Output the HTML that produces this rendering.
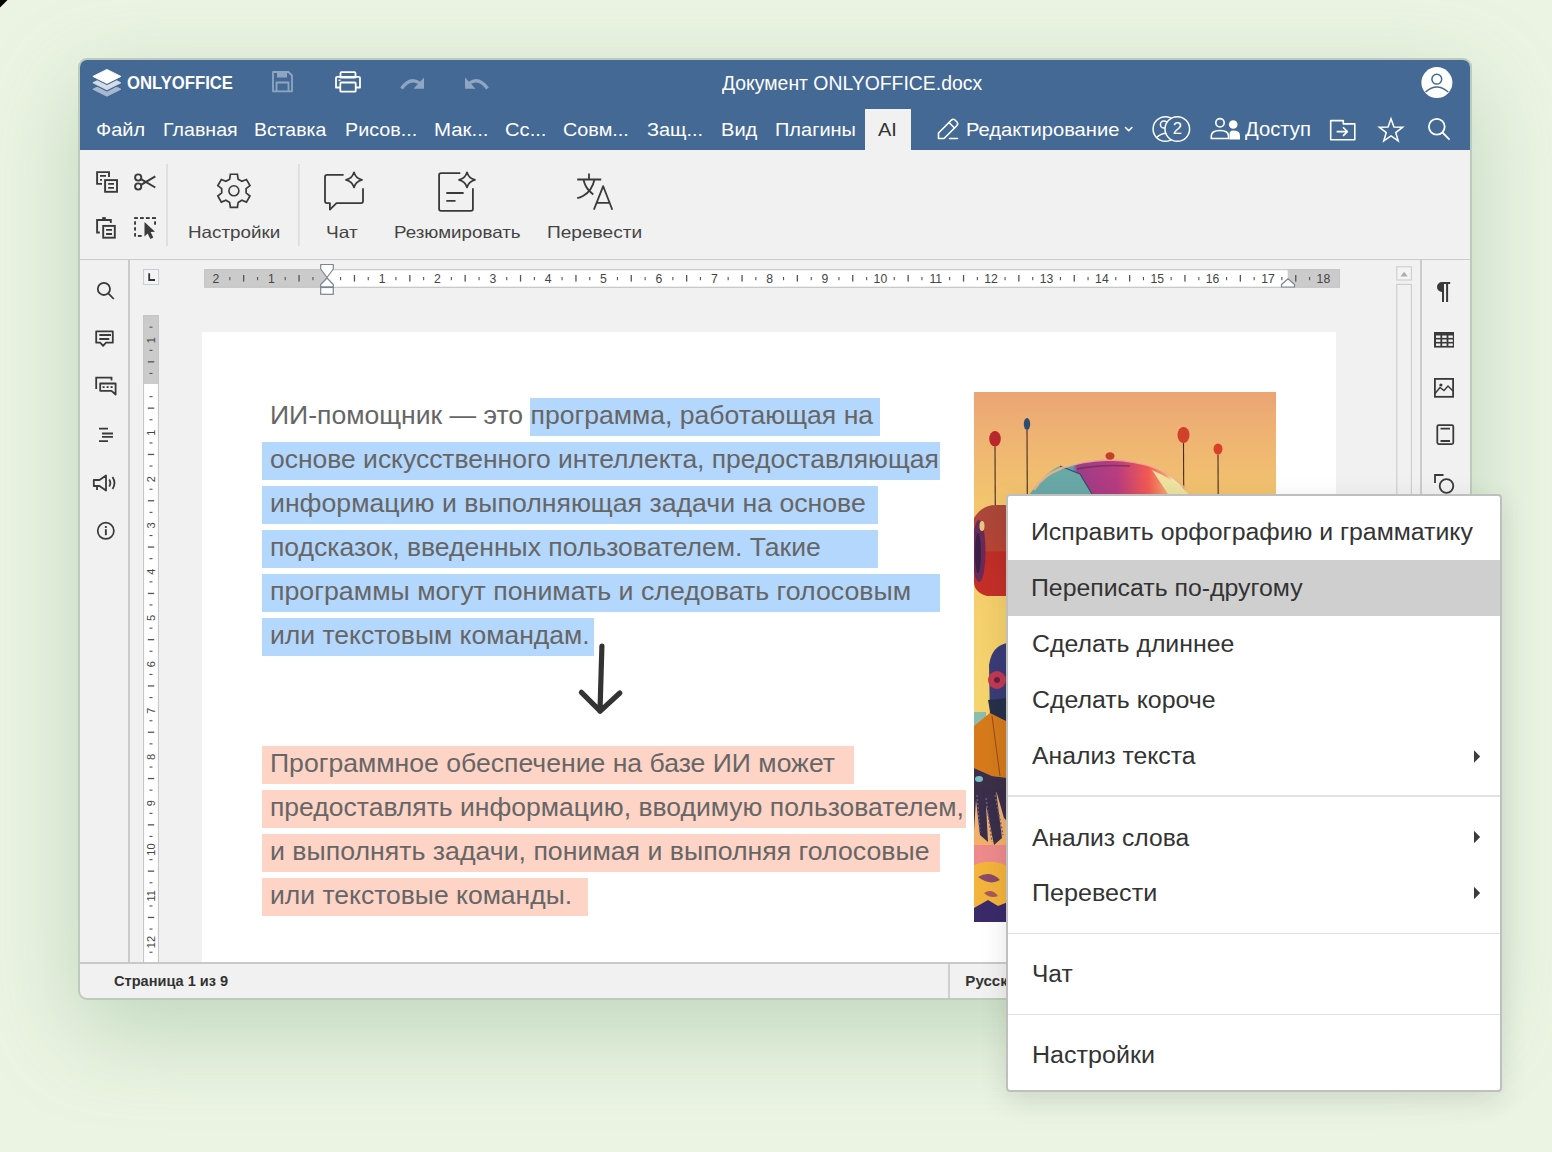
<!DOCTYPE html><html><head><meta charset='utf-8'><style>
*{margin:0;padding:0;box-sizing:border-box}
html,body{width:1552px;height:1152px;overflow:hidden}
body{position:relative;font-family:"Liberation Sans",sans-serif;background:#ecf5e3}
.t{position:absolute;white-space:pre;transform-origin:0 0}
.a{position:absolute}
</style></head><body>
<div class='a' style='left:0;top:0;width:1552px;height:1152px;background:#ebf4e2'></div><svg class='a' style='left:0;top:0' width='10' height='10'><path d='M0,0 L7.5,0 L0,7.5 Z' fill='#000'/></svg>
<div class='a' style='left:78px;top:58px;width:1394px;height:942px;border:2px solid #bccbbb;border-radius:9px;background:#f1f1f1;box-shadow:0 30px 90px rgba(110,160,120,0.35)'></div>
<div class='a' style='left:80px;top:60px;width:1390px;height:90px;background:#446995;border-radius:7px 7px 0 0'></div>
<div class='a' style='left:865px;top:109px;width:46px;height:41px;background:#f1f1f1'></div>
<div class='a' style='left:80px;top:258.5px;width:1390px;height:1.6px;background:#cbcbcb'></div>
<div class='a' style='left:128.3px;top:259px;width:1.6px;height:704px;background:#cbcbcb'></div>
<div class='a' style='left:1420.3px;top:259px;width:1.6px;height:704px;background:#cbcbcb'></div>
<div class='a' style='left:202px;top:332px;width:1134.3px;height:630px;background:#ffffff'></div>
<div class='a' style='left:80px;top:962px;width:1390px;height:1.8px;background:#c8c8c8'></div>
<div class='a' style='left:948px;top:963.5px;width:1.5px;height:34.5px;background:#cfcfcf'></div>
<div class='a' style='left:80px;top:963.7px;width:1390px;height:34.3px;border-radius:0 0 7px 7px'></div>
<div class='a' style='left:530.3px;top:398px;width:349.3px;height:38px;background:#b4d7fd'></div>
<div class='a' style='left:262px;top:442px;width:678.0px;height:38px;background:#b4d7fd'></div>
<div class='a' style='left:262px;top:486px;width:616.0px;height:38px;background:#b4d7fd'></div>
<div class='a' style='left:262px;top:530px;width:616.0px;height:38px;background:#b4d7fd'></div>
<div class='a' style='left:262px;top:574px;width:678.0px;height:38px;background:#b4d7fd'></div>
<div class='a' style='left:262px;top:618px;width:332.0px;height:38px;background:#b4d7fd'></div>
<div class='a' style='left:262px;top:746px;width:592.0px;height:38px;background:#fed4c6'></div>
<div class='a' style='left:262px;top:790px;width:704.0px;height:38px;background:#fed4c6'></div>
<div class='a' style='left:262px;top:834px;width:678.0px;height:38px;background:#fed4c6'></div>
<div class='a' style='left:262px;top:878px;width:326.0px;height:38px;background:#fed4c6'></div>
<svg class='a' style='left:0;top:0' width='1552' height='1152' viewBox='0 0 1552 1152'><rect x='204.2' y='269.2' width='1135.8' height='18.5' fill='#cbcbcb'/><rect x='326.7' y='269.5' width='961' height='17.5' fill='#ffffff'/><rect x='204.7' y='269.7' width='1134.8' height='17.5' fill='none' stroke='#c4c4c4' stroke-width='1'/><g fill='#555'><rect x='229.3' y='277' width='1.1' height='3.2'/><rect x='243.0' y='275' width='1.3' height='6.6'/><rect x='257.0' y='277' width='1.1' height='3.2'/><rect x='284.7' y='277' width='1.1' height='3.2'/><rect x='298.4' y='275' width='1.3' height='6.6'/><rect x='312.4' y='277' width='1.1' height='3.2'/><rect x='340.0' y='277' width='1.1' height='3.2'/><rect x='353.8' y='275' width='1.3' height='6.6'/><rect x='367.7' y='277' width='1.1' height='3.2'/><rect x='395.4' y='277' width='1.1' height='3.2'/><rect x='409.2' y='275' width='1.3' height='6.6'/><rect x='423.1' y='277' width='1.1' height='3.2'/><rect x='450.8' y='277' width='1.1' height='3.2'/><rect x='464.5' y='275' width='1.3' height='6.6'/><rect x='478.5' y='277' width='1.1' height='3.2'/><rect x='506.2' y='277' width='1.1' height='3.2'/><rect x='519.9' y='275' width='1.3' height='6.6'/><rect x='533.8' y='277' width='1.1' height='3.2'/><rect x='561.5' y='277' width='1.1' height='3.2'/><rect x='575.3' y='275' width='1.3' height='6.6'/><rect x='589.2' y='277' width='1.1' height='3.2'/><rect x='616.9' y='277' width='1.1' height='3.2'/><rect x='630.6' y='275' width='1.3' height='6.6'/><rect x='644.6' y='277' width='1.1' height='3.2'/><rect x='672.3' y='277' width='1.1' height='3.2'/><rect x='686.0' y='275' width='1.3' height='6.6'/><rect x='699.9' y='277' width='1.1' height='3.2'/><rect x='727.6' y='277' width='1.1' height='3.2'/><rect x='741.4' y='275' width='1.3' height='6.6'/><rect x='755.3' y='277' width='1.1' height='3.2'/><rect x='783.0' y='277' width='1.1' height='3.2'/><rect x='796.7' y='275' width='1.3' height='6.6'/><rect x='810.7' y='277' width='1.1' height='3.2'/><rect x='838.4' y='277' width='1.1' height='3.2'/><rect x='852.1' y='275' width='1.3' height='6.6'/><rect x='866.1' y='277' width='1.1' height='3.2'/><rect x='893.7' y='277' width='1.1' height='3.2'/><rect x='907.5' y='275' width='1.3' height='6.6'/><rect x='921.4' y='277' width='1.1' height='3.2'/><rect x='949.1' y='277' width='1.1' height='3.2'/><rect x='962.9' y='275' width='1.3' height='6.6'/><rect x='976.8' y='277' width='1.1' height='3.2'/><rect x='1004.5' y='277' width='1.1' height='3.2'/><rect x='1018.2' y='275' width='1.3' height='6.6'/><rect x='1032.2' y='277' width='1.1' height='3.2'/><rect x='1059.9' y='277' width='1.1' height='3.2'/><rect x='1073.6' y='275' width='1.3' height='6.6'/><rect x='1087.5' y='277' width='1.1' height='3.2'/><rect x='1115.2' y='277' width='1.1' height='3.2'/><rect x='1129.0' y='275' width='1.3' height='6.6'/><rect x='1142.9' y='277' width='1.1' height='3.2'/><rect x='1170.6' y='277' width='1.1' height='3.2'/><rect x='1184.3' y='275' width='1.3' height='6.6'/><rect x='1198.3' y='277' width='1.1' height='3.2'/><rect x='1226.0' y='277' width='1.1' height='3.2'/><rect x='1239.7' y='275' width='1.3' height='6.6'/><rect x='1253.6' y='277' width='1.1' height='3.2'/><rect x='1281.3' y='277' width='1.1' height='3.2'/><rect x='1295.1' y='275' width='1.3' height='6.6'/><rect x='1309.0' y='277' width='1.1' height='3.2'/></g><text x='216.0' y='283' font-family='Liberation Sans' font-size='12.2' fill='#444' text-anchor='middle'>2</text><text x='271.3' y='283' font-family='Liberation Sans' font-size='12.2' fill='#444' text-anchor='middle'>1</text><text x='382.1' y='283' font-family='Liberation Sans' font-size='12.2' fill='#444' text-anchor='middle'>1</text><text x='437.4' y='283' font-family='Liberation Sans' font-size='12.2' fill='#444' text-anchor='middle'>2</text><text x='492.8' y='283' font-family='Liberation Sans' font-size='12.2' fill='#444' text-anchor='middle'>3</text><text x='548.2' y='283' font-family='Liberation Sans' font-size='12.2' fill='#444' text-anchor='middle'>4</text><text x='603.5' y='283' font-family='Liberation Sans' font-size='12.2' fill='#444' text-anchor='middle'>5</text><text x='658.9' y='283' font-family='Liberation Sans' font-size='12.2' fill='#444' text-anchor='middle'>6</text><text x='714.3' y='283' font-family='Liberation Sans' font-size='12.2' fill='#444' text-anchor='middle'>7</text><text x='769.7' y='283' font-family='Liberation Sans' font-size='12.2' fill='#444' text-anchor='middle'>8</text><text x='825.0' y='283' font-family='Liberation Sans' font-size='12.2' fill='#444' text-anchor='middle'>9</text><text x='880.4' y='283' font-family='Liberation Sans' font-size='12.2' fill='#444' text-anchor='middle'>10</text><text x='935.8' y='283' font-family='Liberation Sans' font-size='12.2' fill='#444' text-anchor='middle'>11</text><text x='991.1' y='283' font-family='Liberation Sans' font-size='12.2' fill='#444' text-anchor='middle'>12</text><text x='1046.5' y='283' font-family='Liberation Sans' font-size='12.2' fill='#444' text-anchor='middle'>13</text><text x='1101.9' y='283' font-family='Liberation Sans' font-size='12.2' fill='#444' text-anchor='middle'>14</text><text x='1157.2' y='283' font-family='Liberation Sans' font-size='12.2' fill='#444' text-anchor='middle'>15</text><text x='1212.6' y='283' font-family='Liberation Sans' font-size='12.2' fill='#444' text-anchor='middle'>16</text><text x='1268.0' y='283' font-family='Liberation Sans' font-size='12.2' fill='#444' text-anchor='middle'>17</text><text x='1323.4' y='283' font-family='Liberation Sans' font-size='12.2' fill='#444' text-anchor='middle'>18</text><path d='M320.7,264.5 L333.3,264.5 L333.3,269 L327,277.5 L320.7,269 Z' fill='#fff' stroke='#7b8591' stroke-width='1.2' stroke-linejoin='round'/><path d='M327,278 L333.3,284.5 L333.3,287.3 L320.7,287.3 L320.7,284.5 Z' fill='#fff' stroke='#7b8591' stroke-width='1.2' stroke-linejoin='round'/><rect x='320.7' y='287.3' width='12.6' height='7' fill='#fff' stroke='#7b8591' stroke-width='1.2'/><rect x='320.7' y='286.5' width='12.6' height='1.6' fill='#7b8591'/><path d='M1281.5,287 L1281.5,284.5 L1288,278.8 L1294.5,284.5 L1294.5,287 Z' fill='#fff' stroke='#7b8591' stroke-width='1.2' stroke-linejoin='round'/><rect x='143.6' y='269.5' width='15' height='15' fill='#f4f4f4' stroke='#c9ccd1' stroke-width='1'/><path d='M149.2,273.3 L149.2,280 L155,280' fill='none' stroke='#333' stroke-width='1.8'/><rect x='143.1' y='315.2' width='15.8' height='647' fill='#cbcbcb'/><rect x='143.6' y='384' width='14.8' height='578' fill='#ffffff'/><path d='M143.6,962 L143.6,315.7 L158.4,315.7 L158.4,962' fill='none' stroke='#c4c4c4' stroke-width='1'/><g fill='#555'><rect x='149.5' y='326.6' width='3' height='1.1'/><rect x='149.5' y='349.8' width='3' height='1.1'/><rect x='147.8' y='361.2' width='6.4' height='1.3'/><rect x='149.5' y='372.9' width='3' height='1.1'/><rect x='149.5' y='396.1' width='3' height='1.1'/><rect x='147.8' y='407.5' width='6.4' height='1.3'/><rect x='149.5' y='419.2' width='3' height='1.1'/><rect x='149.5' y='442.4' width='3' height='1.1'/><rect x='147.8' y='453.8' width='6.4' height='1.3'/><rect x='149.5' y='465.5' width='3' height='1.1'/><rect x='149.5' y='488.7' width='3' height='1.1'/><rect x='147.8' y='500.1' width='6.4' height='1.3'/><rect x='149.5' y='511.8' width='3' height='1.1'/><rect x='149.5' y='535.0' width='3' height='1.1'/><rect x='147.8' y='546.4' width='6.4' height='1.3'/><rect x='149.5' y='558.1' width='3' height='1.1'/><rect x='149.5' y='581.3' width='3' height='1.1'/><rect x='147.8' y='592.8' width='6.4' height='1.3'/><rect x='149.5' y='604.4' width='3' height='1.1'/><rect x='149.5' y='627.6' width='3' height='1.1'/><rect x='147.8' y='639.0' width='6.4' height='1.3'/><rect x='149.5' y='650.7' width='3' height='1.1'/><rect x='149.5' y='673.9' width='3' height='1.1'/><rect x='147.8' y='685.3' width='6.4' height='1.3'/><rect x='149.5' y='697.0' width='3' height='1.1'/><rect x='149.5' y='720.2' width='3' height='1.1'/><rect x='147.8' y='731.6' width='6.4' height='1.3'/><rect x='149.5' y='743.3' width='3' height='1.1'/><rect x='149.5' y='766.5' width='3' height='1.1'/><rect x='147.8' y='777.9' width='6.4' height='1.3'/><rect x='149.5' y='789.6' width='3' height='1.1'/><rect x='149.5' y='812.8' width='3' height='1.1'/><rect x='147.8' y='824.2' width='6.4' height='1.3'/><rect x='149.5' y='835.9' width='3' height='1.1'/><rect x='149.5' y='859.1' width='3' height='1.1'/><rect x='147.8' y='870.5' width='6.4' height='1.3'/><rect x='149.5' y='882.2' width='3' height='1.1'/><rect x='149.5' y='905.4' width='3' height='1.1'/><rect x='147.8' y='916.8' width='6.4' height='1.3'/><rect x='149.5' y='928.5' width='3' height='1.1'/><rect x='149.5' y='951.7' width='3' height='1.1'/></g><text transform='translate(155.2,340.2) rotate(-90)' font-family='Liberation Sans' font-size='11' fill='#444' text-anchor='middle'>1</text><text transform='translate(155.2,432.8) rotate(-90)' font-family='Liberation Sans' font-size='11' fill='#444' text-anchor='middle'>1</text><text transform='translate(155.2,479.1) rotate(-90)' font-family='Liberation Sans' font-size='11' fill='#444' text-anchor='middle'>2</text><text transform='translate(155.2,525.4) rotate(-90)' font-family='Liberation Sans' font-size='11' fill='#444' text-anchor='middle'>3</text><text transform='translate(155.2,571.7) rotate(-90)' font-family='Liberation Sans' font-size='11' fill='#444' text-anchor='middle'>4</text><text transform='translate(155.2,618.0) rotate(-90)' font-family='Liberation Sans' font-size='11' fill='#444' text-anchor='middle'>5</text><text transform='translate(155.2,664.3) rotate(-90)' font-family='Liberation Sans' font-size='11' fill='#444' text-anchor='middle'>6</text><text transform='translate(155.2,710.6) rotate(-90)' font-family='Liberation Sans' font-size='11' fill='#444' text-anchor='middle'>7</text><text transform='translate(155.2,756.9) rotate(-90)' font-family='Liberation Sans' font-size='11' fill='#444' text-anchor='middle'>8</text><text transform='translate(155.2,803.2) rotate(-90)' font-family='Liberation Sans' font-size='11' fill='#444' text-anchor='middle'>9</text><text transform='translate(155.2,849.5) rotate(-90)' font-family='Liberation Sans' font-size='11' fill='#444' text-anchor='middle'>10</text><text transform='translate(155.2,895.8) rotate(-90)' font-family='Liberation Sans' font-size='11' fill='#444' text-anchor='middle'>11</text><text transform='translate(155.2,942.1) rotate(-90)' font-family='Liberation Sans' font-size='11' fill='#444' text-anchor='middle'>12</text><rect x='1396.8' y='266.8' width='14.6' height='13.2' fill='#f4f4f4' stroke='#cfcfcf' stroke-width='1.2'/><path d='M1400.5,276.5 L1404.1,271.8 L1407.7,276.5 Z' fill='#adadad'/><rect x='1396.8' y='284.4' width='14.6' height='700' fill='#f1f1f1' stroke='#cfcfcf' stroke-width='1.2'/><defs><linearGradient id='sky' x1='0' y1='0' x2='0' y2='1'><stop offset='0' stop-color='#eba574'/><stop offset='0.1' stop-color='#efb672'/><stop offset='0.2' stop-color='#f2c46e'/><stop offset='0.42' stop-color='#f5d06c'/><stop offset='0.62' stop-color='#f5d46e'/><stop offset='0.8' stop-color='#f2b070'/><stop offset='1' stop-color='#eeb050'/></linearGradient><linearGradient id='dome' x1='0' y1='0' x2='1' y2='0'><stop offset='0' stop-color='#70b4aa'/><stop offset='0.27' stop-color='#5f9eaa'/><stop offset='0.3' stop-color='#9c3c88'/><stop offset='0.55' stop-color='#b83c80'/><stop offset='0.75' stop-color='#f25a52'/><stop offset='0.86' stop-color='#f3a070'/><stop offset='0.9' stop-color='#efe6a0'/><stop offset='1' stop-color='#f3eab0'/></linearGradient><linearGradient id='head' x1='0' y1='0' x2='0' y2='1'><stop offset='0' stop-color='#a8483a'/><stop offset='0.5' stop-color='#b84436'/><stop offset='0.52' stop-color='#c02e28'/><stop offset='1' stop-color='#c43028'/></linearGradient><clipPath id='imgclip'><rect x='974' y='392' width='302' height='530'/></clipPath></defs><g clip-path='url(#imgclip)'><rect x='974' y='392' width='302' height='530' fill='url(#sky)'/><path d='M995,446.6 L995.5,558.8' stroke='#4a2a20' stroke-width='1.1'/><ellipse cx='995' cy='438.8' rx='5.8' ry='7.8' fill='#b8282a'/><path d='M1027,430 L1027.5,544' stroke='#4a2a20' stroke-width='1.1'/><ellipse cx='1027' cy='424' rx='3.2' ry='6' fill='#2c4f70'/><path d='M1183.5,443 L1184.0,555' stroke='#4a2a20' stroke-width='1.1'/><ellipse cx='1183.5' cy='435' rx='6' ry='8' fill='#d0402a'/><path d='M1218,454.5 L1218.5,569' stroke='#4a2a20' stroke-width='1.1'/><ellipse cx='1218' cy='449' rx='4.5' ry='5.5' fill='#d8402a'/><path d='M1030,494 Q1050,462 1109,459 Q1165,461 1188,494 Z' fill='url(#dome)'/><path d='M1030,494 Q1045,472 1060,466 L1080,474 L1092,494 Z' fill='#68a8a6'/><path d='M1060,466 L1080,474 L1092,494' stroke='#3a4a6a' stroke-width='1.2' fill='none'/><path d='M1152,470 Q1175,480 1188,494 L1168,494 Z' fill='#eee2a0'/><path d='M1034,490 Q1050,462 1109,459.5 Q1165,461 1186,490' stroke='#f2b48a' stroke-width='2.5' fill='none' opacity='0.85'/><path d='M1077,469 Q1100,464 1130,466' stroke='#6a2a50' stroke-width='1.5' fill='none' opacity='0.7'/><ellipse cx='1110' cy='456' rx='4.5' ry='3.8' fill='#c0402a'/><path d='M974,518 Q982,505 996,505 L1008,505 L1008,596 L987,596 Q974,592 974,582 Z' fill='url(#head)'/><ellipse cx='979' cy='551' rx='6.5' ry='31' fill='#6a2a58'/><ellipse cx='978' cy='553' rx='3' ry='20' fill='#3a2048'/><ellipse cx='982' cy='526' rx='2.5' ry='5' fill='#e8c880'/><path d='M989,665 Q992,645 1008,643 L1008,722 L990,718 Z' fill='#3a3c78'/><circle cx='997' cy='680' r='9' fill='#c03a52'/><circle cx='997' cy='680' r='3' fill='#6a2040'/><path d='M988,700 L1008,698 L1008,722 L992,722 Z' fill='#28304a'/><path d='M974,712 L986,712 L986,726 L974,726 Z' fill='#8abcb0'/><path d='M974,726 L990,713 L1008,722 L1008,778 L992,776 L974,768 Z' fill='#d67a1c'/><path d='M992,716 L1000,776' stroke='#9a4a10' stroke-width='1' fill='none'/><path d='M974,768 L992,776 L1008,778 L1008,792 L974,792 Z' fill='#3c3048'/><ellipse cx='979' cy='779' rx='4' ry='3' fill='#7ac0c8'/><path d='M974,790 L1008,790 L1008,822 L1004,818 L996,790 L1002,838 L994,845 L986,805 L988,842 L980,835 L976,800 L974,830 Z' fill='#3a2e4a'/><path d='M977,795 L980,832 M986,798 L992,842 M995,795 L1003,835' stroke='#6a5a80' stroke-width='1.5' fill='none' stroke-dasharray='2,2'/><rect x='974' y='845' width='34' height='22' fill='#ee8a8c'/><path d='M974,865 Q990,858 1008,866 L1008,905 L974,905 Z' fill='#f3b43c'/><path d='M978,877 Q990,870 1000,880 Q990,886 978,877 Z' fill='#8a4a6a'/><path d='M984,893 Q992,888 998,896 Q990,899 984,893 Z' fill='#a85a5a'/><path d='M974,908 L988,900 L998,906 L1008,902 L1008,922 L974,922 Z' fill='#3a2a6a'/></g><path d='M601.9,646 L600,711 M581.4,692.3 L600.2,711.2 L619.8,693' fill='none' stroke='#333' stroke-width='5.2' stroke-linecap='round' stroke-linejoin='round'/><path d='M92.9,89.2 L106.9,82.2 L120.9,89.2 L106.9,96.2 Z' fill='#a6b9d0' stroke='#a6b9d0' stroke-width='0.9' stroke-linejoin='round'/><path d='M92.9,82.8 L106.9,75.8 L120.9,82.8 L106.9,89.8 Z' fill='#446995' stroke='#446995' stroke-width='3.2' stroke-linejoin='round'/><path d='M92.9,82.8 L106.9,75.8 L120.9,82.8 L106.9,89.8 Z' fill='#d3dce7' stroke='#d3dce7' stroke-width='0.9' stroke-linejoin='round'/><path d='M92.9,76.4 L106.9,69.4 L120.9,76.4 L106.9,83.4 Z' fill='#446995' stroke='#446995' stroke-width='3.2' stroke-linejoin='round'/><path d='M92.9,76.4 L106.9,69.4 L120.9,76.4 L106.9,83.4 Z' fill='#ffffff' stroke='#ffffff' stroke-width='0.9' stroke-linejoin='round'/><g fill='none' stroke='#8fa6c3' stroke-width='1.8' stroke-linejoin='round'><path d='M273,72 L288.5,72 L292,75.5 L292,91.3 L273,91.3 Z'/><path d='M276.5,91.3 L276.5,82.5 L288.5,82.5 L288.5,91.3'/></g><rect x='277' y='72' width='10' height='5.5' fill='#8fa6c3'/><g fill='none' stroke='#fff' stroke-width='1.8' stroke-linejoin='round'><rect x='340.5' y='72.2' width='15' height='5.5' rx='1'/><path d='M340,87.5 L336,87.5 L336,78 Q336,76.8 337.2,76.8 L358.8,76.8 Q360,76.8 360,78 L360,87.5 L356,87.5'/><rect x='340.3' y='82.5' width='15.4' height='9.2' rx='1'/></g><rect x='338.5' y='79.5' width='2' height='1.6' fill='#fff'/><path d='M401.5,88.5 Q410,76.5 419.5,83' fill='none' stroke='#8fa6c3' stroke-width='3.2'/><path d='M424,77.5 L424,88.8 L413.5,88.8 Z' fill='#8fa6c3'/><path d='M487.5,88.5 Q479,76.5 469.5,83' fill='none' stroke='#8fa6c3' stroke-width='3.2'/><path d='M465,77.5 L465,88.8 L475.5,88.8 Z' fill='#8fa6c3'/><circle cx='1436.9' cy='82.6' r='15.5' fill='#fff'/><circle cx='1436.8' cy='79.2' r='4.9' fill='none' stroke='#446995' stroke-width='1.5'/><path d='M1425.5,92 Q1436.8,82 1448.2,92' fill='none' stroke='#446995' stroke-width='1.5'/><g fill='none' stroke='#fff' stroke-width='1.6' stroke-linejoin='round' stroke-linecap='round'><path d='M938.5,133 L951.5,120 Q953.3,118.6 955,120 L957,122 Q958.4,123.7 957,125.5 L944,138.5 L938.5,138.5 Z'/><path d='M949,122.5 L954.5,128'/><path d='M949.5,138.5 L957.5,138.5'/></g><path d='M1125.5,127.5 L1128.7,130.8 L1131.9,127.5' fill='none' stroke='#fff' stroke-width='1.6' stroke-linecap='round' stroke-linejoin='round'/><g fill='none' stroke='#fff' stroke-width='1.5'><circle cx='1165.4' cy='129' r='12.3'/><circle cx='1164' cy='124.5' r='3.6'/><path d='M1156,138 Q1163,131.5 1171,134'/></g><circle cx='1177.3' cy='129' r='12.3' fill='#446995' stroke='#fff' stroke-width='1.5'/><text x='1177.5' y='133.8' font-family='Liberation Sans' font-size='16.8' fill='#fff' text-anchor='middle'>2</text><g fill='none' stroke='#fff' stroke-width='1.6'><circle cx='1220' cy='122.8' r='4.2'/><path d='M1211.3,138.5 L1211.3,136 Q1211.3,130.5 1220,130.5 Q1228.5,130.5 1228.5,136 L1228.5,138.5 Z'/></g><circle cx='1233.2' cy='124.5' r='4.3' fill='#fff'/><path d='M1229.5,139.4 L1229.5,134 Q1229.5,130.5 1233,130.5 Q1240,130.5 1240,135.5 L1240,139.4 Z' fill='#fff'/><g fill='none' stroke='#fff' stroke-width='1.6' stroke-linejoin='round'><path d='M1330.7,120.6 L1343.3,120.6 L1343.3,123.9 L1354.8,123.9 L1354.8,139.8 L1330.7,139.8 Z'/><path d='M1336.6,131.6 L1347.4,131.6 M1343,127.3 L1347.4,131.6 L1343,135.9' stroke-linecap='butt'/></g><path d='M1391.00,118.70 L1393.94,126.95 L1402.70,127.20 L1395.76,132.55 L1398.23,140.95 L1391.00,136.00 L1383.77,140.95 L1386.24,132.55 L1379.30,127.20 L1388.06,126.95 Z' fill='none' stroke='#fff' stroke-width='1.5' stroke-linejoin='miter' stroke-miterlimit='3'/><g fill='none' stroke='#fff' stroke-width='1.8'><circle cx='1436.8' cy='126.8' r='7.9'/><path d='M1442.5,132.5 L1449.5,139.6'/></g><g fill='none' stroke='#3a3a3a' stroke-width='1.9'><path d='M109,177 L109,172.1 L97.1,172.1 L97.1,183.9 L102,183.9'/><path d='M100,175.9 L106,175.9 M100,179.9 L102,179.9'/><rect x='105.1' y='180.1' width='11.9' height='11.7'/><path d='M108.2,183.9 L114,183.9 M108.2,187.9 L114,187.9'/><circle cx='138.2' cy='177.5' r='3.1'/><circle cx='138.2' cy='186.5' r='3.1'/><path d='M141,179.2 L155.3,187.5 M141,184.8 L155.3,176.3' stroke-width='2'/><path d='M110.8,223 L110.8,220 L97.1,220 L97.1,232.5 L99.8,232.5'/><rect x='103.2' y='225.9' width='11.6' height='11.8'/><path d='M106.1,229.9 L112,229.9 M106.1,234 L112,234'/><path d='M229.66,179.15 L230.39,174.27 L237.41,174.27 L238.14,179.15 L241.87,181.30 L246.46,179.49 L249.97,185.58 L246.11,188.65 L246.11,192.95 L249.97,196.02 L246.46,202.11 L241.87,200.30 L238.14,202.45 L237.41,207.33 L230.39,207.33 L229.66,202.45 L225.93,200.30 L221.34,202.11 L217.83,196.02 L221.69,192.95 L221.69,188.65 L217.83,185.58 L221.34,179.49 L225.93,181.30 Z' stroke-width='1.7' stroke-linejoin='miter'/><circle cx='233.9' cy='190.8' r='5.0' stroke-width='1.6'/></g><rect x='102.2' y='217.1' width='3.6' height='2.5' fill='#3a3a3a'/><g fill='#3a3a3a'><rect x='134.1' y='217.1' width='3.8' height='1.9'/><rect x='140' y='217.1' width='3.8' height='1.9'/><rect x='145.9' y='217.1' width='3.8' height='1.9'/><rect x='152' y='217.1' width='4' height='1.9'/><rect x='134.1' y='221.3' width='1.9' height='3.4'/><rect x='134.1' y='227.2' width='1.9' height='3.4'/><rect x='134.1' y='233.1' width='1.9' height='3.5'/><rect x='137.9' y='235' width='3.8' height='1.9'/><rect x='154.1' y='221.3' width='1.9' height='3.4'/></g><path d='M144.5,221.9 L144.5,236.5 L147.6,233.6 L150.4,239 L153.3,237.4 L150.6,232.1 L155,231.7 Z' fill='#3a3a3a'/><rect x='166.3' y='164' width='1.4' height='82' fill='#d8d8d8'/><rect x='298.2' y='164' width='1.4' height='82' fill='#d8d8d8'/><g fill='none' stroke='#3a3a3a' stroke-width='1.8' stroke-linejoin='round' stroke-linecap='butt'><path d='M343.6,174.9 L327,174.9 Q325,174.9 325,177 L325,201 Q325,203.1 327,203.1 L329.9,203.1 L329.9,209.6 L336.5,203.1 L361,203.1 Q363,203.1 363,201 L363,188.3'/><path d='M354,172.3 Q355.6,178.3 362.0,179.9 Q355.6,181.5 354,187.5 Q352.4,181.5 346.0,179.9 Q352.4,178.3 354,172.3 Z' stroke-width='1.7'/><path d='M460.3,173.1 L441,173.1 Q439.1,173.1 439.1,175 L439.1,209 Q439.1,210.9 441,210.9 L471,210.9 Q472.9,210.9 472.9,209 L472.9,188.3'/><path d='M446.3,193 L463.6,193 M446.3,200.9 L455.5,200.9'/><path d='M467,172.3 Q468.6,178.3 475.0,179.9 Q468.6,181.5 467,187.5 Q465.4,181.5 459.0,179.9 Q465.4,178.3 467,172.3 Z' stroke-width='1.7'/><path d='M589,173.4 L589,179.5 M577.2,179.5 L601.2,179.5'/><path d='M583.5,179.5 Q585,187 590,191.5 Q591.5,193 593.3,194.5'/><path d='M594.5,179.5 Q592,191 583,196 Q580,197.8 577.2,198.2'/><path d='M593.9,209.7 L603.2,186.2 L612.3,209.7 M597.4,202.9 L609,202.9'/></g><g fill='none' stroke='#3a3a3a' stroke-width='1.8'><circle cx='103.9' cy='288.9' r='6.1'/><path d='M108.3,293.3 L113.8,299'/><path d='M97.2,331.3 L112.8,331.3 L112.8,342.7 L106,342.7 L103.1,345.8 L100.2,342.7 L96.2,342.7 L96.2,331.3 Z' stroke-linejoin='round'/><path d='M99.3,335 L111,335 M99.3,339 L109.3,339'/><path d='M96.2,389 L96.2,377.7 L111.5,377.7 L111.5,380.5'/><path d='M100.2,383.5 L115.6,383.5 L115.6,394.5 L111.5,390.8 L100.2,390.8 Z' stroke-linejoin='round'/></g><g fill='#3a3a3a'><rect x='102.6' y='386.2' width='2' height='1.8'/><rect x='106.6' y='386.2' width='2' height='1.8'/><rect x='110.6' y='386.2' width='2' height='1.8'/></g><g fill='none' stroke='#3a3a3a' stroke-width='1.8'><path d='M99,428.6 L108,428.6 M102,433.5 L113,433.5 M102,436.9 L113,436.9 M99,441.2 L108,441.2'/></g><g fill='none' stroke='#3a3a3a' stroke-width='1.8' stroke-linejoin='round'><path d='M93.8,480 L99.5,480 L106,475.5 L106,490.5 L99.5,486 L93.8,486 Z'/><path d='M97,486 L97,490'/><path d='M109.2,479.5 Q111.5,483 109.2,486.5 M112.5,477 Q116.5,483 112.5,489'/></g><circle cx='105.8' cy='530.8' r='8.1' fill='none' stroke='#3a3a3a' stroke-width='1.7'/><rect x='104.9' y='529.2' width='1.9' height='6' fill='#3a3a3a'/><rect x='104.9' y='526' width='1.9' height='1.9' fill='#3a3a3a'/><path d='M1442,282 L1450.2,282 L1450.2,284.1 L1448.1,284.1 L1448.1,302 L1446.1,302 L1446.1,284.1 L1444,284.1 L1444,302 L1442,302 L1442,292 A5,5 0 0 1 1442,282 Z' fill='#3a3a3a'/><rect x='1434' y='332' width='20' height='15.6' fill='#3a3a3a'/><g fill='#f1f1f1'><rect x='1436.0' y='335.5' width='4.4' height='2.4'/><rect x='1436.0' y='339.5' width='4.4' height='2.4'/><rect x='1436.0' y='343.5' width='4.4' height='2.4'/><rect x='1442.2' y='335.5' width='4.4' height='2.4'/><rect x='1442.2' y='339.5' width='4.4' height='2.4'/><rect x='1442.2' y='343.5' width='4.4' height='2.4'/><rect x='1448.4' y='335.5' width='4.4' height='2.4'/><rect x='1448.4' y='339.5' width='4.4' height='2.4'/><rect x='1448.4' y='343.5' width='4.4' height='2.4'/></g><g fill='none' stroke='#3a3a3a' stroke-width='1.8'><rect x='1434.9' y='378.9' width='18.2' height='17.9'/><path d='M1435,393.5 L1440,387.5 L1444,390.5 L1448,386 L1453,391' stroke-width='1.5'/><rect x='1437.3' y='425.1' width='16' height='19' rx='1.5'/><path d='M1440.5,428.6 L1450,428.6 M1440.5,441 L1450,441'/><path d='M1443.5,475 L1435,475 L1435,483'/><circle cx='1446.5' cy='486' r='6.8'/></g><circle cx='1440.9' cy='385' r='1.6' fill='#3a3a3a'/></svg>
<span class='t' style='left:126.97px;top:74.00px;font-size:18.16px;line-height:18.16px;color:#ffffff;font-weight:700;transform:scaleX(0.9190)'>ONLYOFFICE</span>
<span class='t' style='left:722.10px;top:74.00px;font-size:19.69px;line-height:19.69px;color:#ffffff;font-weight:400;transform:scaleX(0.9845)'>Документ ONLYOFFICE.docx</span>
<span class='t' style='left:96.40px;top:121.00px;font-size:18.58px;line-height:18.58px;color:#ffffff;font-weight:400;transform:scaleX(1.0744)'>Файл</span>
<span class='t' style='left:162.93px;top:121.00px;font-size:18.58px;line-height:18.58px;color:#ffffff;font-weight:400;transform:scaleX(1.0560)'>Главная</span>
<span class='t' style='left:254.14px;top:121.00px;font-size:18.58px;line-height:18.58px;color:#ffffff;font-weight:400;transform:scaleX(1.0457)'>Вставка</span>
<span class='t' style='left:344.52px;top:121.00px;font-size:18.58px;line-height:18.58px;color:#ffffff;font-weight:400;transform:scaleX(1.0613)'>Рисов...</span>
<span class='t' style='left:434.17px;top:121.00px;font-size:18.58px;line-height:18.58px;color:#ffffff;font-weight:400;transform:scaleX(1.0982)'>Мак...</span>
<span class='t' style='left:504.99px;top:121.00px;font-size:18.58px;line-height:18.58px;color:#ffffff;font-weight:400;transform:scaleX(1.0851)'>Сс...</span>
<span class='t' style='left:563.01px;top:121.00px;font-size:18.58px;line-height:18.58px;color:#ffffff;font-weight:400;transform:scaleX(1.0682)'>Совм...</span>
<span class='t' style='left:647.30px;top:121.00px;font-size:18.58px;line-height:18.58px;color:#ffffff;font-weight:400;transform:scaleX(1.0727)'>Защ...</span>
<span class='t' style='left:720.50px;top:121.00px;font-size:18.58px;line-height:18.58px;color:#ffffff;font-weight:400;transform:scaleX(1.0798)'>Вид</span>
<span class='t' style='left:775.00px;top:121.00px;font-size:18.58px;line-height:18.58px;color:#ffffff;font-weight:400;transform:scaleX(1.0753)'>Плагины</span>
<span class='t' style='left:878.00px;top:120.00px;font-size:19.27px;line-height:19.27px;color:#333333;font-weight:400;transform:scaleX(1.0377)'>AI</span>
<span class='t' style='left:966.09px;top:120.00px;font-size:19.13px;line-height:19.13px;color:#ffffff;font-weight:400;transform:scaleX(1.0536)'>Редактирование</span>
<span class='t' style='left:1244.70px;top:120.00px;font-size:19.55px;line-height:19.55px;color:#ffffff;font-weight:400;transform:scaleX(1.0357)'>Доступ</span>
<span class='t' style='left:187.89px;top:224.00px;font-size:17.32px;line-height:17.32px;color:#444444;font-weight:400;transform:scaleX(1.0855)'>Настройки</span>
<span class='t' style='left:326.37px;top:224.00px;font-size:17.32px;line-height:17.32px;color:#444444;font-weight:400;transform:scaleX(1.1035)'>Чат</span>
<span class='t' style='left:393.59px;top:224.00px;font-size:17.32px;line-height:17.32px;color:#444444;font-weight:400;transform:scaleX(1.0834)'>Резюмировать</span>
<span class='t' style='left:547.27px;top:224.00px;font-size:17.32px;line-height:17.32px;color:#444444;font-weight:400;transform:scaleX(1.1034)'>Перевести</span>
<span class='t' style='left:113.67px;top:973.00px;font-size:15.08px;line-height:15.08px;color:#333333;font-weight:700;transform:scaleX(0.9658)'>Страница 1 из 9</span>
<span class='t' style='left:965.37px;top:973.00px;font-size:15.08px;line-height:15.08px;color:#333333;font-weight:700;transform:scaleX(1.0000)'>Русский</span>
<span class='t' style='left:270.41px;top:402.00px;font-size:26.40px;line-height:26.40px;color:#666666;font-weight:400;transform:scaleX(1.0065)'>ИИ-помощник — это программа, работающая на</span>
<span class='t' style='left:269.88px;top:446.00px;font-size:26.40px;line-height:26.40px;color:#666666;font-weight:400;transform:scaleX(1.0026)'>основе искусственного интеллекта, предоставляющая</span>
<span class='t' style='left:269.80px;top:490.00px;font-size:26.40px;line-height:26.40px;color:#666666;font-weight:400;transform:scaleX(1.0100)'>информацию и выполняющая задачи на основе</span>
<span class='t' style='left:269.81px;top:534.00px;font-size:26.40px;line-height:26.40px;color:#666666;font-weight:400;transform:scaleX(1.0058)'>подсказок, введенных пользователем. Такие</span>
<span class='t' style='left:269.79px;top:578.00px;font-size:26.40px;line-height:26.40px;color:#666666;font-weight:400;transform:scaleX(1.0135)'>программы могут понимать и следовать голосовым</span>
<span class='t' style='left:269.81px;top:622.00px;font-size:26.40px;line-height:26.40px;color:#666666;font-weight:400;transform:scaleX(1.0047)'>или текстовым командам.</span>
<span class='t' style='left:269.80px;top:750.00px;font-size:26.40px;line-height:26.40px;color:#666666;font-weight:400;transform:scaleX(1.0077)'>Программное обеспечение на базе ИИ может</span>
<span class='t' style='left:269.81px;top:794.00px;font-size:26.40px;line-height:26.40px;color:#666666;font-weight:400;transform:scaleX(1.0051)'>предоставлять информацию, вводимую пользователем,</span>
<span class='t' style='left:269.80px;top:838.00px;font-size:26.40px;line-height:26.40px;color:#666666;font-weight:400;transform:scaleX(1.0119)'>и выполнять задачи, понимая и выполняя голосовые</span>
<span class='t' style='left:269.81px;top:882.00px;font-size:26.40px;line-height:26.40px;color:#666666;font-weight:400;transform:scaleX(1.0044)'>или текстовые команды.</span>
<div class='a' style='left:1006px;top:494px;width:496px;height:598px;border:2px solid #bfbfbf;border-radius:4px;background:#fff;box-shadow:0 8px 28px rgba(0,0,0,0.11)'></div>
<div class='a' style='left:1008px;top:560px;width:492px;height:56px;background:#cfcfcf'></div>
<div class='a' style='left:1008px;top:795.3px;width:492px;height:1.6px;background:#e2e2e2'></div>
<div class='a' style='left:1008px;top:932.8px;width:492px;height:1.6px;background:#e2e2e2'></div>
<div class='a' style='left:1008px;top:1013.9px;width:492px;height:1.6px;background:#e2e2e2'></div>
<svg class='a' style='left:0;top:0' width='1552' height='1152' viewBox='0 0 1552 1152'><path d='M1474,750.3 L1480.2,756.5 L1474,762.7 Z' fill='#3c3c3c'/><path d='M1474,830.8 L1480.2,837 L1474,843.2 Z' fill='#3c3c3c'/><path d='M1474,886.8 L1480.2,893 L1474,899.2 Z' fill='#3c3c3c'/></svg>
<span class='t' style='left:1031.44px;top:521.00px;font-size:23.74px;line-height:23.74px;color:#333333;font-weight:400;transform:scaleX(1.0470)'>Исправить орфографию и грамматику</span>
<span class='t' style='left:1031.44px;top:577.00px;font-size:23.74px;line-height:23.74px;color:#333333;font-weight:400;transform:scaleX(1.0465)'>Переписать по-другому</span>
<span class='t' style='left:1032.06px;top:633.00px;font-size:23.74px;line-height:23.74px;color:#333333;font-weight:400;transform:scaleX(1.0464)'>Сделать длиннее</span>
<span class='t' style='left:1032.05px;top:689.00px;font-size:23.74px;line-height:23.74px;color:#333333;font-weight:400;transform:scaleX(1.0490)'>Сделать короче</span>
<span class='t' style='left:1032.20px;top:745.00px;font-size:23.74px;line-height:23.74px;color:#333333;font-weight:400;transform:scaleX(1.0427)'>Анализ текста</span>
<span class='t' style='left:1032.20px;top:827.00px;font-size:23.74px;line-height:23.74px;color:#333333;font-weight:400;transform:scaleX(1.0379)'>Анализ слова</span>
<span class='t' style='left:1031.51px;top:882.00px;font-size:23.74px;line-height:23.74px;color:#333333;font-weight:400;transform:scaleX(1.0597)'>Перевести</span>
<span class='t' style='left:1031.56px;top:963.00px;font-size:23.74px;line-height:23.74px;color:#333333;font-weight:400;transform:scaleX(1.0322)'>Чат</span>
<span class='t' style='left:1031.52px;top:1044.00px;font-size:23.74px;line-height:23.74px;color:#333333;font-weight:400;transform:scaleX(1.0560)'>Настройки</span>
</body></html>
